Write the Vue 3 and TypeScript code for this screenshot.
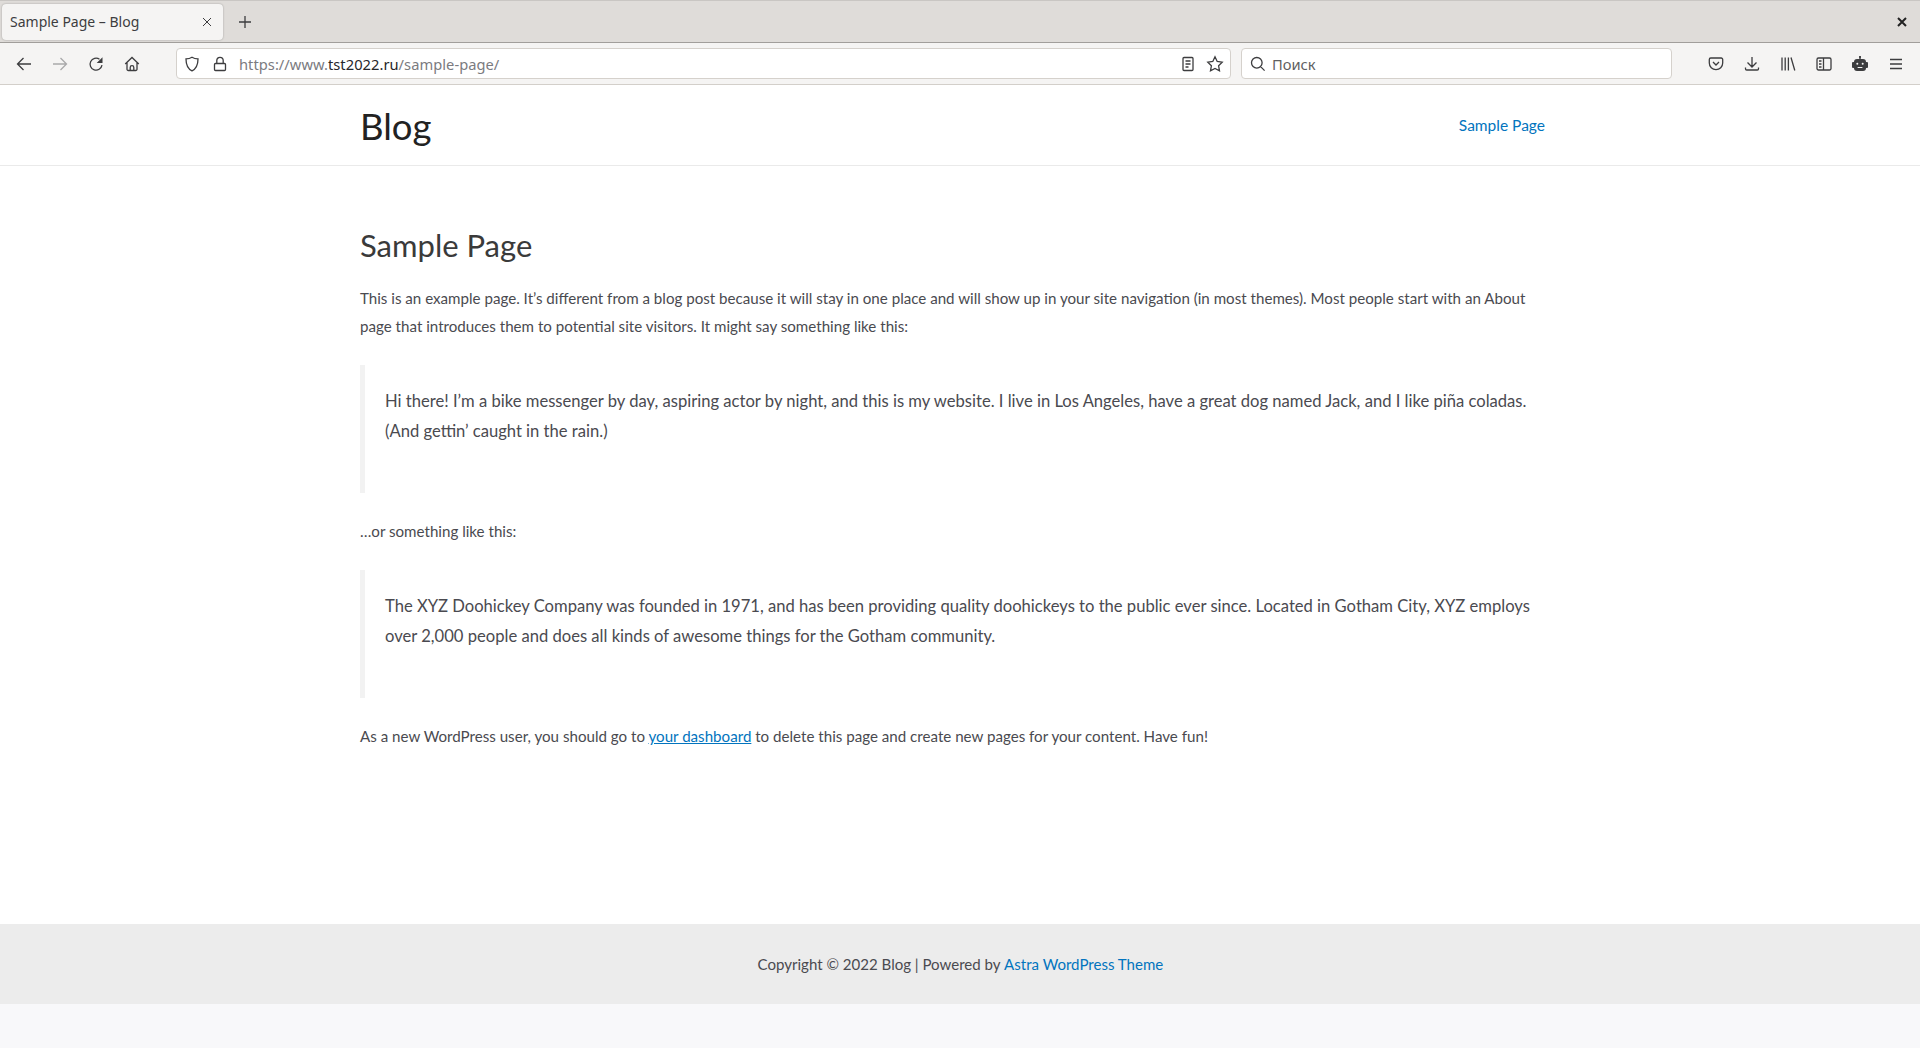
<script setup lang="ts">
const toolbarLeft = ['back', 'forward', 'reload', 'home']
</script>

<template>
  <div class="browser">
    <div class="tabbar">
      <div class="tab">
        <span class="tab-title">Sample Page – Blog</span>
        <svg class="tab-close" width="12" height="12" viewBox="0 0 12 12"><path d="M2 2l8 8M10 2l-8 8" /></svg>
      </div>
      <svg class="new-tab" width="16" height="16" viewBox="0 0 16 16"><path d="M8 2v12M2 8h12" /></svg>
      <svg class="win-close" width="12" height="12" viewBox="0 0 12 12"><path d="M2 2l8 8M10 2l-8 8" /></svg>
    </div>

    <div class="toolbar">
      <div class="nav-btns">
        <svg v-for="name in toolbarLeft" :key="name" class="icon" :class="{ dim: name === 'forward' }" width="16" height="16" viewBox="0 0 16 16">
          <path v-if="name === 'back'" d="M15 8H1.500M7.500 2L1.500 8l6 6" />
          <path v-else-if="name === 'forward'" d="M1 8h13.500M8.500 2l6 6-6 6" />
          <template v-else-if="name === 'reload'">
            <path d="M14 9.200A6 6 0 1 1 11.500 3.200" />
            <path class="solid" d="M14.500 1.200V7H8.700z" />
          </template>
          <path v-else d="M1.200 8L8 1.500 14.800 8M3 6.500v6.700a1.300 1.300 0 0 0 1.300 1.300h7.400a1.300 1.300 0 0 0 1.300-1.300V6.500M6.200 14.500v-3a1.800 1.800 0 0 1 3.600 0v3" />
        </svg>
      </div>

      <div class="urlbar">
        <svg class="icon" width="16" height="16" viewBox="0 0 16 16"><path d="M8 1.200c2 1.200 4 1.600 6 1.700 0 6-1.800 9.800-6 11.900C3.800 12.700 2 8.900 2 2.900c2-.1 4-.5 6-1.700z" /></svg>
        <svg class="icon lock" width="16" height="16" viewBox="0 0 16 16"><path d="M4.800 7.500V4.500a3.200 3.200 0 0 1 6.400 0v3M3.500 7.500h9a1 1 0 0 1 1 1v5a1 1 0 0 1-1 1h-9a1 1 0 0 1-1-1v-5a1 1 0 0 1 1-1z" /></svg>
        <span class="url"><span class="url-dim">https://www.</span>tst2022.ru<span class="url-dim">/sample-page/</span></span>
        <svg class="icon reader" width="16" height="16" viewBox="0 0 16 16"><path d="M4 1.500h8a1 1 0 0 1 1 1v11a1 1 0 0 1-1 1H4a1 1 0 0 1-1-1v-11a1 1 0 0 1 1-1zM5.500 5h5M5.500 8h5M5.500 11h3" /></svg>
        <svg class="icon star" width="18" height="18" viewBox="0 0 18 18"><path d="M9 1.800l2.200 4.700 5 .7-3.600 3.600.9 5.100L9 13.500l-4.500 2.400.9-5.100L1.800 7.200l5-.7z" /></svg>
      </div>

      <div class="searchbar">
        <svg class="icon" width="16" height="16" viewBox="0 0 16 16"><path d="M6.800 1.500a5.300 5.300 0 1 0 0 10.600 5.300 5.300 0 0 0 0-10.600zM10.600 10.600l4 4" /></svg>
        <span class="search-text">Поиск</span>
      </div>

      <div class="tools">
        <svg class="icon" width="16" height="16" viewBox="0 0 16 16"><path d="M2.800 2h10.400a1.500 1.500 0 0 1 1.500 1.500V7A6.700 6.700 0 0 1 1.300 7V3.500A1.500 1.500 0 0 1 2.800 2zM5 6l3 3 3-3" /></svg>
        <svg class="icon" width="16" height="16" viewBox="0 0 16 16"><path d="M8 1v9.500M3.500 6.500l4.500 4.500 4.500-4.500M1.500 11.500v1.300a1.200 1.200 0 0 0 1.200 1.200h10.600a1.200 1.200 0 0 0 1.200-1.200v-1.300" /></svg>
        <svg class="icon" width="16" height="16" viewBox="0 0 16 16"><path d="M2 1.500v13M5.200 1.500v13M8.400 1.500v13M11 1.500l3.800 13" /></svg>
        <svg class="icon" width="16" height="16" viewBox="0 0 16 16"><path d="M2.500 2h11A1.500 1.500 0 0 1 15 3.500v9a1.500 1.500 0 0 1-1.500 1.500h-11A1.500 1.500 0 0 1 1 12.500v-9A1.500 1.500 0 0 1 2.500 2zM7.500 2v12M3 5h2.500M3 8h2.500M3 11h2.500" /></svg>
        <svg class="robot" width="16" height="16" viewBox="0 0 16 16">
          <rect x="7.300" y="0" width="1.400" height="3" />
          <circle cx="8" cy="1" r="1" />
          <rect x="2" y="3" width="12" height="12" rx="3" />
          <rect x="0" y="6" width="2.500" height="6" rx="1" />
          <rect x="13.500" y="6" width="2.500" height="6" rx="1" />
          <circle class="face" cx="5.300" cy="7.800" r="1" />
          <circle class="face" cx="10.700" cy="7.800" r="1" />
          <rect class="face" x="5.500" y="11" width="5" height="1" rx=".5" />
        </svg>
        <svg class="icon" width="16" height="16" viewBox="0 0 16 16"><path d="M2 3.500h12M2 8h12M2 12.500h12" /></svg>
      </div>
    </div>

    <div class="page">
      <header class="site-header">
        <div class="container header-row">
          <div class="site-title">Blog</div>
          <a class="menu-link">Sample Page</a>
        </div>
      </header>

      <main class="content">
        <h1>Sample Page</h1>
        <p>This is an example page. It’s different from a blog post because it will stay in one place and will show up in your site navigation (in most themes). Most people start with an About page that introduces them to potential site visitors. It might say something like this:</p>
        <blockquote>Hi there! I’m a bike messenger by day, aspiring actor by night, and this is my website. I live in Los Angeles, have a great dog named Jack, and I like piña coladas. (And gettin’ caught in the rain.)</blockquote>
        <p>…or something like this:</p>
        <blockquote>The XYZ Doohickey Company was founded in 1971, and has been providing quality doohickeys to the public ever since. Located in Gotham City, XYZ employs over 2,000 people and does all kinds of awesome things for the Gotham community.</blockquote>
        <p>As a new WordPress user, you should go to <a class="dash">your dashboard</a> to delete this page and create new pages for your content. Have fun!</p>
      </main>

      <footer class="site-footer">
        Copyright © 2022 Blog | Powered by <a>Astra WordPress Theme</a>
      </footer>
    </div>
  </div>
</template>

<style>
html, body {
  margin: 0;
  background: #f8f8fa;
}
</style>

<style scoped>
.browser {
  height: 1048px;
  overflow: hidden;
  display: flex;
  flex-direction: column;
  font-family: Lato, "Noto Sans", sans-serif;
}

svg path {
  fill: none;
  stroke: #3d3d3f;
  stroke-width: 1.3;
}

svg path.solid {
  fill: #3d3d3f;
  stroke: none;
}

.tabbar {
  flex: none;
  display: flex;
  align-items: center;
  background: #dfdcd9;
  border-top: 1px solid #c9c6c3;
  border-bottom: 1px solid #a19e9b;
  height: 41px;
  font-family: "Noto Sans", sans-serif;
}

.tab {
  width: 221px;
  height: 36px;
  margin-left: 2px;
  padding: 0 8px;
  box-sizing: border-box;
  display: flex;
  align-items: center;
  justify-content: space-between;
  background: #f5f4f3;
  border-radius: 4px;
  box-shadow: 0 0 2px rgba(0, 0, 0, 0.3);
  color: #3d3d3f;
  font-size: 14px;
}

.tab-close {
  margin-right: 2px;
}

.tab-close path {
  stroke-width: 1;
}

.new-tab {
  margin-left: 14px;
}

.win-close {
  margin-left: auto;
  margin-right: 12px;
}

.win-close path {
  stroke: #222;
  stroke-width: 2;
}

.toolbar {
  height: 41px;
  flex: none;
  display: flex;
  align-items: center;
  background: #f5f4f3;
  border-bottom: 1px solid #d3cfca;
  font-family: "Noto Sans", sans-serif;
}

.nav-btns {
  display: flex;
  gap: 20px;
  padding-left: 16px;
  width: 160px;
  flex: none;
  box-sizing: border-box;
}

.dim path {
  stroke: #a9a9aa;
}

.urlbar,
.searchbar {
  height: 31px;
  box-sizing: border-box;
  display: flex;
  align-items: center;
  background: #fff;
  border: 1px solid #d5d1cc;
  border-radius: 4px;
  font-size: 14.7px;
}

.urlbar {
  width: 1055px;
  margin-left: 16px;
  padding: 0 6px 0 7px;
}

.lock {
  margin-left: 12px;
}

.url {
  margin-left: 11px;
  color: #26262a;
  flex: 1;
  letter-spacing: 0.03px;
}

.url-dim {
  color: #7b7b7f;
}

.reader {
  margin-right: 10px;
}

.searchbar {
  width: 431px;
  margin-left: 10px;
  padding: 0 8px;
  color: #5f5f62;
}

.search-text {
  margin-left: 6px;
}

.tools {
  display: flex;
  gap: 20px;
  margin-left: 36px;
}

.robot rect,
.robot circle {
  fill: #3d3d3f;
}

.robot .face {
  fill: #f5f4f3;
}

.page {
  flex: 1;
  background: #f8f8fa;
  display: flex;
  flex-direction: column;
}

.container {
  width: 1185px;
  margin-left: 360px;
}

.site-header {
  background: #fff;
  height: 80px;
  flex: none;
  border-bottom: 1px solid #eaeaea;
}

.header-row {
  height: 80px;
  display: flex;
  align-items: center;
  justify-content: space-between;
}

.site-title {
  font-size: 36.5px;
  color: #222;
  line-height: 1.2;
  padding-top: 4px;
}

.menu-link {
  font-size: 15.5px;
  color: #0274be;
}

.content {
  padding: 60px 375px 0 360px;
  background: #fff;
  height: 758px;
  flex: none;
  box-sizing: border-box;
  font-size: 15.13px;
  line-height: 28px;
  color: #4a4a50;
}

h1 {
  margin: 0 0 19px;
  font-size: 31px;
  font-weight: 400;
  line-height: 39px;
  color: #3a3a3a;
}

p {
  margin: 0 0 25px;
}

blockquote {
  margin: 0 0 24px;
  padding: 21px 0 47px 20px;
  border-left: 5px solid #f2f2f2;
  font-size: 16.6px;
  line-height: 30px;
}

.dash {
  color: #0274be;
  text-decoration: underline;
}

.site-footer {
  background: #ececec;
  height: 80px;
  flex: none;
  display: flex;
  align-items: center;
  justify-content: center;
  white-space: pre-wrap;
  font-size: 15.05px;
  color: #4a4a50;
  padding-right: 3px;
}

.site-footer a {
  color: #0274be;
}
</style>
